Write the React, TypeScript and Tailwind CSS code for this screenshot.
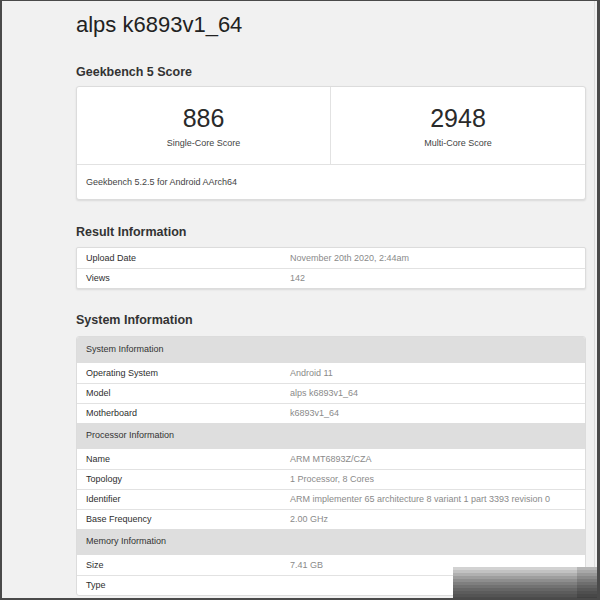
import React from "react";

type Row = { label: string; value?: string; header?: boolean };

const systemRows: Row[] = [
  { label: "System Information", header: true },
  { label: "Operating System", value: "Android 11" },
  { label: "Model", value: "alps k6893v1_64" },
  { label: "Motherboard", value: "k6893v1_64" },
  { label: "Processor Information", header: true },
  { label: "Name", value: "ARM MT6893Z/CZA" },
  { label: "Topology", value: "1 Processor, 8 Cores" },
  { label: "Identifier", value: "ARM implementer 65 architecture 8 variant 1 part 3393 revision 0" },
  { label: "Base Frequency", value: "2.00 GHz" },
  { label: "Memory Information", header: true },
  { label: "Size", value: "7.41 GB" },
  { label: "Type", value: "" },
];

function DataRow({ label, value, first }: { label: string; value?: string; first?: boolean }) {
  return (
    <div
      className={`grid grid-cols-[204px_1fr] h-[20px] items-center pl-[9px] text-[9px] leading-[19px] ${
        first ? "" : "border-t border-[#e2e2e2]"
      }`}
    >
      <div className="text-[#2e2e2e] font-medium">{label}</div>
      <div className="text-[#8a8a8a] whitespace-nowrap">{value}</div>
    </div>
  );
}

export default function App() {
  return (
    <div className="relative w-[600px] h-[600px] overflow-hidden bg-[#f1f1f1] border-t border-l-2 border-r-[3px] border-b-2 border-[#4a4a4a] font-['Liberation_Sans',Arial,sans-serif]">
      <div className="h-full w-[593px] border-r border-[#dcdcdc] pl-[74px] pt-[11px]">
        <div className="w-[510px]">
          <h1 className="text-[22px] leading-[26px] text-[#222]">alps k6893v1_64</h1>

          <h2 className="mt-[26px] text-[12.5px] leading-[16px] font-bold text-[#333]">Geekbench 5 Score</h2>
          <div className="mt-[6px] bg-white border border-[#dcdcdc] rounded-[3px] shadow-[0_1px_2px_rgba(0,0,0,0.10)]">
            <div className="grid grid-cols-2 border-b border-[#e2e2e2]">
              <div className="flex flex-col items-center pt-[16px] pb-[15px] border-r border-[#e2e2e2]">
                <div className="text-[25px] leading-[30px] text-[#2a2a2a]">886</div>
                <div className="mt-[4px] text-[9px] leading-[12px] text-[#444] font-medium">Single-Core Score</div>
              </div>
              <div className="flex flex-col items-center pt-[16px] pb-[15px]">
                <div className="text-[25px] leading-[30px] text-[#2a2a2a]">2948</div>
                <div className="mt-[4px] text-[9px] leading-[12px] text-[#444] font-medium">Multi-Core Score</div>
              </div>
            </div>
            <div className="pl-[9px] pt-[11px] pb-[11px] text-[9px] leading-[12px] text-[#444]">
              Geekbench 5.2.5 for Android AArch64
            </div>
          </div>

          <h2 className="mt-[24px] text-[12.5px] leading-[16px] font-bold text-[#333]">Result Information</h2>
          <div className="mt-[7px] bg-white border border-[#dcdcdc] rounded-[2px] shadow-[0_1px_2px_rgba(0,0,0,0.10)]">
            <DataRow label="Upload Date" value="November 20th 2020, 2:44am" first />
            <DataRow label="Views" value="142" />
          </div>

          <h2 className="mt-[23px] text-[12.5px] leading-[16px] font-bold text-[#333]">System Information</h2>
          <div className="mt-[8px] bg-white border border-[#dcdcdc] rounded-[3px] overflow-hidden">
            {systemRows.map((r, i) =>
              r.header ? (
                <div
                  key={i}
                  className="h-[26px] flex items-center pl-[9px] bg-[#dedede] text-[9px] text-[#333] font-medium"
                >
                  {r.label}
                </div>
              ) : (
                <DataRow key={i} label={r.label} value={r.value} first={systemRows[i - 1]?.header} />
              )
            )}
          </div>
        </div>
      </div>
      <div className="absolute left-[451px] top-[566px] w-[146px] h-[32px] flex flex-col">
        <div className="h-[3px] bg-[#d2d2d2]" />
        <div className="h-[3px] bg-[#c2c2c2]" />
        <div className="h-[3px] bg-[#b0b0b0]" />
        <div className="h-[3px] bg-[#9e9e9e]" />
        <div className="h-[3px] bg-[#8e8e8e]" />
        <div className="h-[3px] bg-[#7f7f7f]" />
        <div className="h-[3px] bg-[#727272]" />
        <div className="h-[3px] bg-[#666666]" />
        <div className="h-[3px] bg-[#5c5c5c]" />
        <div className="h-[3px] bg-[#545454]" />
        <div className="flex-1 bg-[#4c4c4c]" />
      </div>
      <div className="absolute left-[575px] top-[566px] w-[22px] h-[32px] bg-[#00000022]" />
    </div>
  );
}
